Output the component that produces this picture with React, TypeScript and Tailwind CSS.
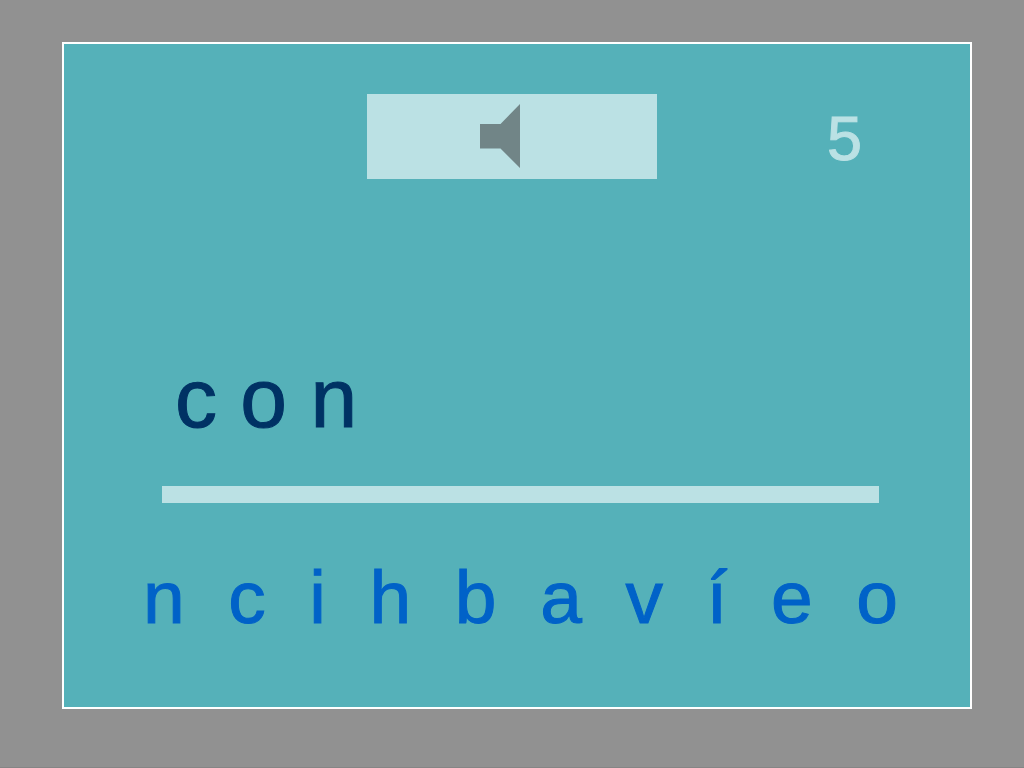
import { useState } from "react";

const LETTERS = ["n", "c", "i", "h", "b", "a", "v", "í", "e", "o"];

export default function App() {
  const [typed, setTyped] = useState<string[]>(["c", "o", "n"]);

  return (
    <div className="flex min-h-screen flex-col border-b border-[#858585] bg-[#919191] pt-[42px] pr-[52px] pb-[58px] pl-[62px] font-['Liberation_Sans',Arial,sans-serif] [-webkit-text-stroke-width:1px]">
      <main className="flex flex-1 flex-col border-2 border-white bg-[#55b1b9] pt-[50px] pb-16">
        <header className="grid grid-cols-[1fr_290px_1fr] items-center pr-[10px]">
          <button
            type="button"
            aria-label="Play sound"
            className="col-start-2 flex h-[85px] cursor-pointer items-start bg-[#bbe1e4] pt-[10px] pl-[113px]"
          >
            <svg viewBox="0 0 40 64" className="h-16 w-10" fill="#718587" aria-hidden="true">
              <path d="M0 20H20.5L40 0V64L20.5 44.5H0Z" />
            </svg>
          </button>
          <p className="pt-[3px] pl-[170px] text-[63px] leading-none text-[#bbe1e4]">5</p>
        </header>

        <section className="mt-[177px] pr-[91px] pl-[98px]">
          <p className="min-h-[84px] pl-[13px] text-[84px] leading-none text-[#003264]">
            {typed.join(" ")}
          </p>
          <div className="mt-[46px] h-[17px] bg-[#bbe1e4]" />
        </section>

        <div className="mt-[57px] flex justify-between pr-[72px] pl-[79px]">
          {LETTERS.map((letter) => (
            <button
              key={letter}
              type="button"
              onClick={() => setTyped([...typed, letter])}
              className="cursor-pointer text-[75px] leading-none text-[#0062c8]"
            >
              {letter}
            </button>
          ))}
        </div>
      </main>
    </div>
  );
}
